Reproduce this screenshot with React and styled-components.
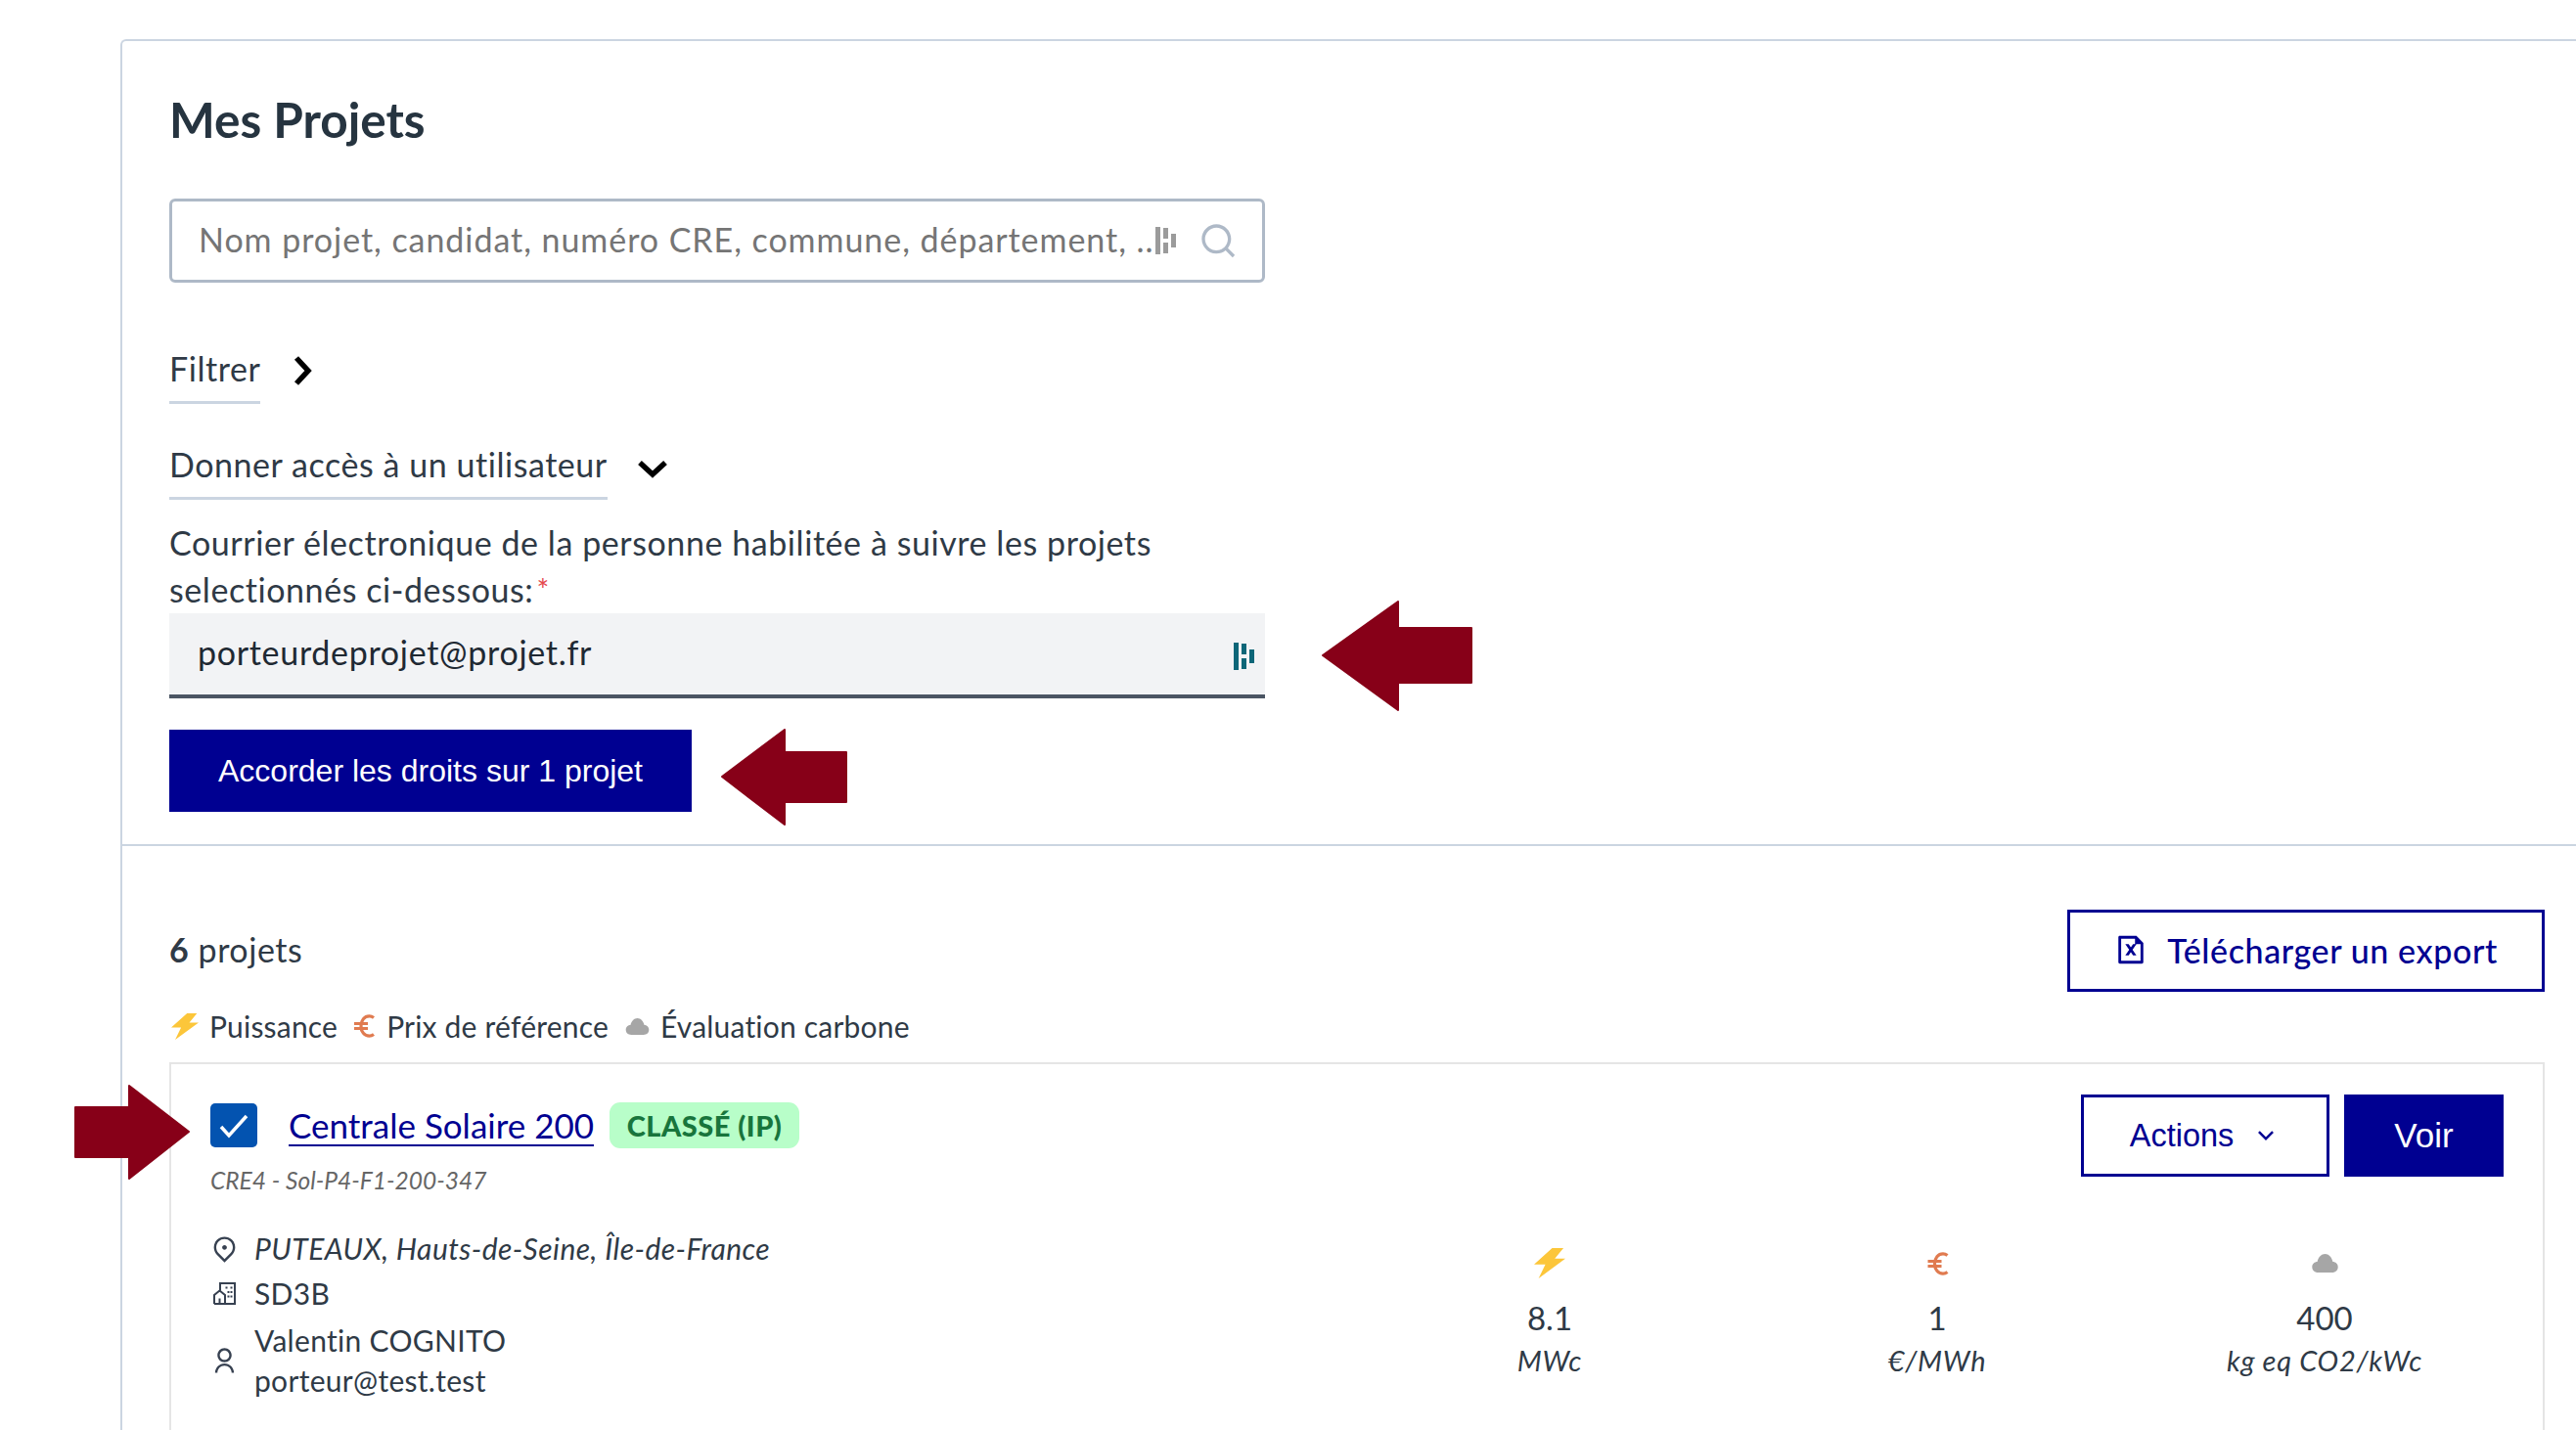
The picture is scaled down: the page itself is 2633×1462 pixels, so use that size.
import React from 'react'
import styled, { createGlobalStyle } from 'styled-components'
import { RiSearchLine, RiMapPin2Line, RiUserLine, RiFileExcelLine, RiArrowDownSLine } from 'react-icons/ri'

const GlobalStyle = createGlobalStyle`
html, body {
  margin: 0;
  background: #fff;
}
* { box-sizing: border-box; }
body {
  font-family: Lato, "Noto Sans", sans-serif;
  color: #2f3a46;
}
`

const Page = styled.div`
height: 1462px;
overflow: hidden;
padding: 40px 0 0 123px;
`
const Panel = styled.main`
border-top: 2px solid #cbd5e1;
border-left: 2px solid #cbd5e1;
border-top-left-radius: 6px;
`
const Header = styled.section`
padding: 50px 0 33px 48px;
border-bottom: 2px solid #cbd5e1;
`
const Title = styled.h1`
margin: 0 0 51px;
font-size: 49.5px;
line-height: 60px;
font-weight: 700;
color: #263440;
`
const SearchBox = styled.div`
position: relative;
width: 1120px;
height: 86px;
border: 3px solid #aeb9c7;
border-radius: 6px;
display: flex;
align-items: center;
padding: 0 80px 4px 27px;
svg.search {
  position: absolute;
  right: 25px;
  top: 20px;
  color: #aeb9c7;
}
`
const SearchInput = styled.input`
border: 0;
outline: 0;
width: 100%;
padding: 0;
background: none;
font: 34px Lato, sans-serif;
letter-spacing: 0.95px;
&::placeholder {
  color: #757575;
  opacity: 1;
}
`
const Toggle = styled.div`
display: flex;
align-items: flex-start;
gap: ${p => p.$gap}px;
margin-top: ${p => p.$top}px;
font-size: 34px;
letter-spacing: 0.55px;
line-height: 48px;
`
const ToggleLabel = styled.span`
padding-bottom: 9px;
border-bottom: 3px solid #cbd5e1;
`
const Chevron = styled.svg`
margin-top: ${p => p.$top}px;
flex: none;
`
const FieldLabel = styled.label`
display: block;
margin-top: 20px;
margin-bottom: 1px;
width: 1120px;
font-size: 34px;
letter-spacing: 0.57px;
line-height: 47.5px;
em {
  color: #e5484d;
  font-style: normal;
  font-size: 30px;
  margin-left: 3px;
  vertical-align: 2px;
}
`
const EmailField = styled.div`
position: relative;
width: 1120px;
height: 87px;
background: #f2f3f5;
border-bottom: 4px solid #4b5563;
`
const EmailInput = styled.input`
border: 0;
outline: 0;
width: 100%;
height: 83px;
background: none;
padding: 0 100px 4px 29px;
color: #1f2933;
font: 34px Lato, sans-serif;
letter-spacing: 0.7px;
`
const Keeper = styled.svg`
position: absolute;
left: ${p => p.$left}px;
top: ${p => p.$top}px;
`
const Annotation = styled.svg`
position: absolute;
left: ${p => p.$left}px;
top: ${p => p.$top}px;
z-index: 2;
`
const ButtonWrap = styled.div`
position: relative;
width: 534px;
margin-top: 32px;
`
const PrimaryButton = styled.button`
border: 0;
background: #000091;
color: #fff;
width: ${p => p.$width}px;
height: ${p => p.$height}px;
padding: 0;
font-family: "Liberation Sans", Arial, sans-serif;
font-size: ${p => p.$size}px;
`
const ListSection = styled.section`
padding: 65px 32px 0 48px;
`
const ListTop = styled.div`
display: flex;
align-items: center;
justify-content: space-between;
font-size: 34px;
letter-spacing: 0.55px;
b { font-weight: 700; }
`
const ProjectCount = styled.span`
margin-top: -3px;
`
const ExportButton = styled.button`
width: 488px;
height: 84px;
border: 3px solid #000091;
background: #fff;
color: #000091;
display: flex;
align-items: center;
justify-content: center;
gap: 20px;
padding: 0 0 2px;
font: 500 34px Lato, sans-serif;
letter-spacing: 0.6px;
`
const Legend = styled.div`
display: flex;
align-items: center;
margin-top: 15px;
padding-left: 2px;
height: 40px;
font-size: 30px;
letter-spacing: 0.2px;
`
const LegendItem = styled.span`
display: flex;
align-items: center;
gap: ${p => p.$gap}px;
margin-right: ${p => p.$after}px;
`
const ProjectCard = styled.article`
position: relative;
margin-top: 17px;
border: 2px solid #e5e5e5;
padding: 31px 40px 60px 40px;
`
const CardHead = styled.div`
display: flex;
justify-content: space-between;
align-items: flex-start;
height: 106px;
`
const TitleRow = styled.div`
display: flex;
align-items: center;
margin-top: 8px;
height: 47px;
`
const Checkbox = styled.span`
width: 48px;
height: 45px;
border-radius: 5px;
background: #0353b0;
display: flex;
align-items: center;
justify-content: center;
margin-right: 32px;
`
const ProjectLink = styled.a`
color: #000091;
font-size: 35px;
margin-bottom: 2px;
text-decoration: underline;
text-underline-offset: 6px;
text-decoration-thickness: 2px;
margin-right: 16px;
`
const Badge = styled.span`
background: #b8fec9;
color: #18753c;
border-radius: 11px;
width: 194px;
height: 47px;
display: flex;
align-items: center;
justify-content: center;
font-size: 29px;
font-weight: 900;
letter-spacing: 0.5px;
`
const Reference = styled.div`
margin-top: 15px;
color: #666;
font-size: 24.5px;
font-style: italic;
line-height: 36px;
`
const Actions = styled.div`
display: flex;
gap: 15px;
`
const OutlineButton = styled.button`
width: 254px;
height: 84px;
border: 3px solid #000091;
background: #fff;
color: #000091;
display: flex;
align-items: center;
justify-content: center;
gap: 18px;
padding: 0;
font: 32.5px "Liberation Sans", Arial, sans-serif;
`
const CardBody = styled.div`
display: flex;
justify-content: space-between;
margin-top: 28px;
`
const InfoList = styled.div`
font-size: 30px;
`
const InfoRow = styled.div`
display: flex;
align-items: center;
gap: 16px;
min-height: ${p => p.$height}px;
margin-bottom: ${p => p.$after || 0}px;
font-style: ${p => (p.$italic ? 'italic' : 'normal')};
letter-spacing: ${p => (p.$italic ? 0.45 : 0.3)}px;
line-height: 41px;
svg { color: #374151; flex: none; }
`
const Metrics = styled.div`
display: grid;
grid-template-columns: repeat(3, 396px);
margin-right: -15px;
padding-top: 22px;
text-align: center;
`
const Metric = styled.div`
display: flex;
flex-direction: column;
align-items: center;
`
const MetricIcon = styled.div`
height: 33px;
margin-bottom: 17px;
display: flex;
align-items: center;
`
const MetricValue = styled.div`
font-size: 33px;
line-height: 44px;
`
const MetricUnit = styled.div`
font-size: 29px;
line-height: 44px;
font-style: italic;
letter-spacing: 0.7px;
`

const Bolt = ({ width, height }) => (
    <svg width={width} height={height} viewBox="0 0 83 80">
        <path d="M48 0H78L55 28H83L12 80L30 43H0Z" fill="#fcc63a" />
    </svg>
)

const Euro = ({ width, height }) => (
    <svg width={width} height={height} viewBox="0 0 22 24" fill="none" stroke="#e07b50" strokeWidth="3.200">
        <path d="M21 3.500C19.500 2.300 18 1.800 16.500 1.800C11.500 1.800 8 6 8 12C8 18 11.500 22.200 16.500 22.200C18 22.200 19.500 21.700 21 20.500" />
        <path d="M1 9.500H15M1 14.500H15" />
    </svg>
)

const Cloud = ({ width, height }) => (
    <svg width={width} height={height} viewBox="0 0 25 18">
        <path d="M6 18C2 18 0 15.500 0 12.500C0 9.500 2.500 7.500 5 7.500C6 3 9 0 12.500 0C16 0 19 3 20 7.500C22.500 7.500 25 9.500 25 12.500C25 15.500 23 18 19 18Z" fill="#a6a6a6" />
    </svg>
)

const Building = () => (
    <svg width="29" height="29" viewBox="-2.500 -2.500 29 29" fill="none" stroke="#374151" strokeWidth="2">
        <path d="M1.500 22.500H22.500V1.500H7.500V9" />
        <path d="M1.500 22.500V13.500L7 9L12.500 13.500V22.500" />
        <path d="M7 22.500V17" />
        <path d="M13 6H15M18 6H20M15 10.500H17M18 10.500H20M15 15H17M18 15H20" />
    </svg>
)

const Dashlane = ({ color, left, top }) => (
    <Keeper $left={left} $top={top} width="21" height="28" viewBox="0 0 21 28" fill={color}>
        <rect x="0" y="0" width="5" height="28" />
        <rect x="8" y="1" width="5" height="11" />
        <rect x="8" y="16" width="5" height="11" />
        <rect x="16" y="7" width="5" height="14" />
    </Keeper>
)

const ArrowShape = ({ left, top, width, height, d }) => (
    <Annotation $left={left} $top={top} width={width} height={height} viewBox={`0 0 ${width} ${height}`}>
        <path d={d} fill="#870018" stroke="#870018" strokeWidth="2" strokeLinejoin="round" />
    </Annotation>
)

const App = () => {
    return (
        <Page>
            <GlobalStyle />
            <Panel>
                <Header>
                    <Title>Mes Projets</Title>
                    <SearchBox>
                        <SearchInput placeholder="Nom projet, candidat, numéro CRE, commune, département, ..." />
                        <Dashlane color="#9b9b9b" left={1005} top={26} />
                        <RiSearchLine className="search" size={40} />
                    </SearchBox>
                    <Toggle $top={64} $gap={33}>
                        <ToggleLabel>Filtrer</ToggleLabel>
                        <Chevron $top={10} width="20" height="32" viewBox="0 0 20 32" fill="none" stroke="#000" strokeWidth="5.500">
                            <path d="M4 3L16 16L4 29" />
                        </Chevron>
                    </Toggle>
                    <Toggle $top={38} $gap={30}>
                        <ToggleLabel>Donner accès à un utilisateur</ToggleLabel>
                        <Chevron $top={18} width="32" height="20" viewBox="0 0 32 20" fill="none" stroke="#000" strokeWidth="5.500">
                            <path d="M3 4L16 16L29 4" />
                        </Chevron>
                    </Toggle>
                    <FieldLabel>
                        Courrier électronique de la personne habilitée à suivre les projets selectionnés ci-dessous:<em>*</em>
                    </FieldLabel>
                    <EmailField>
                        <EmailInput readOnly value="porteurdeprojet@projet.fr" />
                        <Dashlane color="#0d6678" left={1088} top={30} />
                        <ArrowShape left={1178} top={-13} width={155} height={113} d="M1 56L78 1V28H153V84H78V112Z" />
                    </EmailField>
                    <ButtonWrap>
                        <PrimaryButton $width={534} $height={84} $size={32}>Accorder les droits sur 1 projet</PrimaryButton>
                        <ArrowShape left={564} top={-1} width={130} height={100} d="M1 49L65 1V24H128V75H65V98Z" />
                    </ButtonWrap>
                </Header>
                <ListSection>
                    <ListTop>
                        <ProjectCount><b>6</b> projets</ProjectCount>
                        <ExportButton><RiFileExcelLine size={34} />Télécharger un export</ExportButton>
                    </ListTop>
                    <Legend>
                        <LegendItem $gap={11} $after={16}><Bolt width={28} height={27} />Puissance</LegendItem>
                        <LegendItem $gap={12} $after={17}><Euro width={22} height={24} />Prix de référence</LegendItem>
                        <LegendItem $gap={11} $after={0}><Cloud width={25} height={17} />Évaluation carbone</LegendItem>
                    </Legend>
                    <ProjectCard>
                        <ArrowShape left={-99} top={21} width={118} height={97} d="M1 23H56V1L117 48L56 96V74H1Z" />
                        <CardHead>
                            <div>
                                <TitleRow>
                                    <Checkbox>
                                        <svg width="32" height="26" viewBox="0 0 32 26" fill="none" stroke="#fff" strokeWidth="3.500">
                                            <path d="M3 14L11 23L29 3" />
                                        </svg>
                                    </Checkbox>
                                    <ProjectLink href="#">Centrale Solaire 200</ProjectLink>
                                    <Badge>CLASSÉ (IP)</Badge>
                                </TitleRow>
                                <Reference>CRE4 - Sol-P4-F1-200-347</Reference>
                            </div>
                            <Actions>
                                <OutlineButton>Actions<RiArrowDownSLine size={30} /></OutlineButton>
                                <PrimaryButton $width={163} $height={84} $size={35}>Voir</PrimaryButton>
                            </Actions>
                        </CardHead>
                        <CardBody>
                            <InfoList>
                                <InfoRow $height={46} $italic><RiMapPin2Line size={29} />PUTEAUX, Hauts-de-Seine, Île-de-France</InfoRow>
                                <InfoRow $height={46} $after={5}><Building />SD3B</InfoRow>
                                <InfoRow $height={82}>
                                    <RiUserLine size={29} />
                                    <div>Valentin COGNITO<br />porteur@test.test</div>
                                </InfoRow>
                            </InfoList>
                            <Metrics>
                                <Metric>
                                    <MetricIcon><Bolt width={32} height={33} /></MetricIcon>
                                    <MetricValue>8.1</MetricValue>
                                    <MetricUnit>MWc</MetricUnit>
                                </Metric>
                                <Metric>
                                    <MetricIcon><Euro width={25} height={24} /></MetricIcon>
                                    <MetricValue>1</MetricValue>
                                    <MetricUnit>€/MWh</MetricUnit>
                                </Metric>
                                <Metric>
                                    <MetricIcon><Cloud width={29} height={19} /></MetricIcon>
                                    <MetricValue>400</MetricValue>
                                    <MetricUnit>kg eq CO2/kWc</MetricUnit>
                                </Metric>
                            </Metrics>
                        </CardBody>
                    </ProjectCard>
                </ListSection>
            </Panel>
        </Page>
    )
}

export default App
